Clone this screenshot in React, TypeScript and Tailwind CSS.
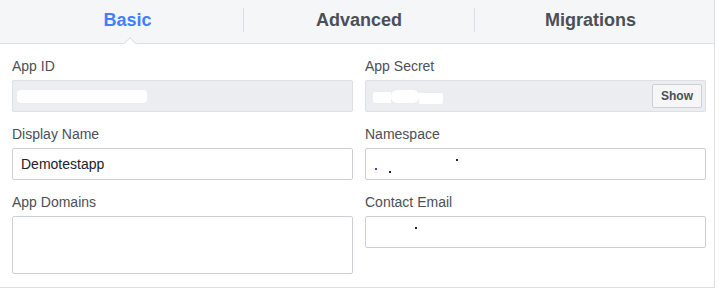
const labelClass = "block h-[18px] text-[14px] leading-[18px] text-[#4b4f56] mb-[5px]";
const inputClass =
  "relative h-[32px] w-full rounded-[2px] border border-[#ccd0d5] bg-white px-[8px] text-[14px] leading-[30px] text-[#1d2129]";
const disabledClass =
  "flex h-[32px] w-full items-center rounded-[2px] border border-[#dddfe2] bg-[#ebedf0]";

const Dot = ({ x, y, c = "#1d2129" }: { x: number; y: number; c?: string }) => (
  <span className="absolute h-[2px] w-[2px]" style={{ left: x, top: y, background: c }} />
);

const Tab = ({ label, active, width }: { label: string; active?: boolean; width: string }) => (
  <div className={`relative flex h-full justify-center pt-[8px] ${width}`}>
    <span
      className={`text-[18px] font-bold leading-[24px] ${active ? "text-[#4080ff]" : "text-[#4b4f56]"}`}
    >
      {label}
    </span>
    {active && (
      <span className="absolute bottom-[-6px] left-1/2 z-10 h-[10px] w-[10px] -translate-x-[3px] rotate-45 border-l border-t border-[#dddfe2] bg-white" />
    )}
  </div>
);

export default function App() {
  return (
    <div
      className="w-[715px] border-b border-r border-[#dddfe2] bg-white"
      style={{ fontFamily: '"Liberation Sans", Arial, sans-serif' }}
    >
      <div className="flex h-[44px] items-start border-b border-[#dddfe2] bg-[#f5f6f7] pl-3">
        <Tab label="Basic" active width="w-[231px]" />
        <div className="mt-[8px] h-6 w-px bg-[#dddfe2]" />
        <Tab label="Advanced" width="w-[230px]" />
        <div className="mt-[8px] h-6 w-px bg-[#dddfe2]" />
        <Tab label="Migrations" width="w-[231px]" />
      </div>

      <div className="grid grid-cols-[341px_341px] gap-x-3 pb-[13px] pl-3 pr-2 pt-[13px]">
        <div>
          <label className={labelClass}>App ID</label>
          <div className={`${disabledClass} mb-[13px] pl-[4px]`}>
            <span className="h-[13px] w-[130px] rounded-[4px] bg-white" />
          </div>
          <label className={labelClass}>Display Name</label>
          <div className={`${inputClass} mb-[13px]`}>Demotestapp</div>
          <label className={labelClass}>App Domains</label>
          <div className="h-[58px] w-full rounded-[2px] border border-[#ccd0d5] bg-white" />
        </div>
        <div>
          <label className={labelClass}>App Secret</label>
          <div className={`${disabledClass} mb-[13px] pl-[7px] pr-[3px]`}>
            <span className="mt-[3px] h-[11px] w-[18px] rounded-l-[2px] bg-white" />
            <span className="h-[13px] w-[28px] rounded-[6px] bg-white" />
            <span className="mt-[4px] h-[11px] w-[24px] rounded-r-[2px] bg-white" />
            <button className="ml-auto h-[24px] w-[50px] rounded-[2px] border border-[#ccd0d5] bg-[#f5f6f7] text-[12px] font-bold text-[#4b4f56]">
              Show
            </button>
          </div>
          <label className={labelClass}>Namespace</label>
          <div className={`${inputClass} mb-[13px]`}>
            <Dot x={9} y={19} c="#6b3a8a" />
            <Dot x={23} y={22} />
            <Dot x={90} y={10} />
          </div>
          <label className={labelClass}>Contact Email</label>
          <div className={inputClass}>
            <Dot x={49} y={10} />
          </div>
        </div>
      </div>
    </div>
  );
}
